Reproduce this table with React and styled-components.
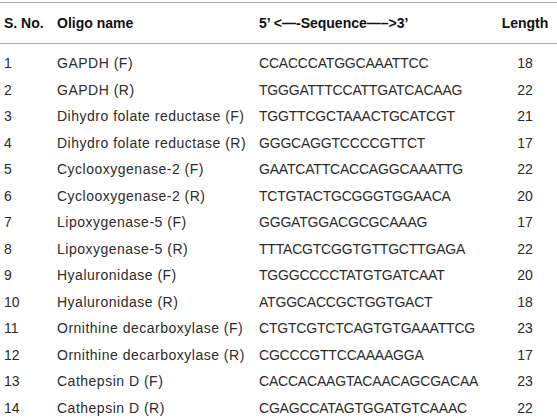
import React from 'react';
import styled, { createGlobalStyle } from 'styled-components';

const GlobalStyle = createGlobalStyle`
    body {
        margin: 0;
        background: #fff;
        font-family: "Liberation Sans", Arial, sans-serif;
    }
`;

const rows = [
    ['1', 'GAPDH (F)', 'CCACCCATGGCAAATTCC', '18'],
    ['2', 'GAPDH (R)', 'TGGGATTTCCATTGATCACAAG', '22'],
    ['3', 'Dihydro folate reductase (F)', 'TGGTTCGCTAAACTGCATCGT', '21'],
    ['4', 'Dihydro folate reductase (R)', 'GGGCAGGTCCCCGTTCT', '17'],
    ['5', 'Cyclooxygenase-2 (F)', 'GAATCATTCACCAGGCAAATTG', '22'],
    ['6', 'Cyclooxygenase-2 (R)', 'TCTGTACTGCGGGTGGAACA', '20'],
    ['7', 'Lipoxygenase-5 (F)', 'GGGATGGACGCGCAAAG', '17'],
    ['8', 'Lipoxygenase-5 (R)', 'TTTACGTCGGTGTTGCTTGAGA', '22'],
    ['9', 'Hyaluronidase (F)', 'TGGGCCCCTATGTGATCAAT', '20'],
    ['10', 'Hyaluronidase (R)', 'ATGGCACCGCTGGTGACT', '18'],
    ['11', 'Ornithine decarboxylase (F)', 'CTGTCGTCTCAGTGTGAAATTCG', '23'],
    ['12', 'Ornithine decarboxylase (R)', 'CGCCCGTTCCAAAAGGA', '17'],
    ['13', 'Cathepsin D (F)', 'CACCACAAGTACAACAGCGACAA', '23'],
    ['14', 'Cathepsin D (R)', 'CGAGCCATAGTGGATGTCAAAC', '22'],
];

export default function App() {
    return (
        <>
            <GlobalStyle />
            <Table>
                <HeadRow>
                    <Cell>S. No.</Cell>
                    <Cell>Oligo name</Cell>
                    <Cell>5’ &lt;—-Sequence—–&gt;3’</Cell>
                    <Cell center>Length</Cell>
                </HeadRow>
                <Body>
                    {rows.map(r => (
                        <Row key={r[0]}>
                            <Cell>{r[0]}</Cell>
                            <Cell spacing="0.5px">{r[1]}</Cell>
                            <Cell spacing="-0.2px">{r[2]}</Cell>
                            <Cell center>{r[3]}</Cell>
                        </Row>
                    ))}
                </Body>
            </Table>
        </>
    );
}

const Table = styled.div`
    width: 557px;
    padding-top: 2px;
`;

const columns = `53px 202px 238px 64px`;

const HeadRow = styled.div`
    display: grid;
    grid-template-columns: ${columns};
    align-items: center;
    height: 40px;
    border-top: 1px solid #a8a8a8;
    border-bottom: 1px solid #a8a8a8;
    font-weight: bold;
    font-size: 14px;
    color: #111;
`;

const Body = styled.div`
    padding-top: 6px;
`;

const Row = styled.div`
    display: grid;
    grid-template-columns: ${columns};
    align-items: center;
    height: 26.5px;
    font-size: 14px;
    color: #2b2b2b;
`;

const Cell = styled.div`
    padding-left: ${p => (p.center ? '0' : '4px')};
    text-align: ${p => (p.center ? 'center' : 'left')};
    letter-spacing: ${p => p.spacing || 'normal'};
    white-space: nowrap;
`;
